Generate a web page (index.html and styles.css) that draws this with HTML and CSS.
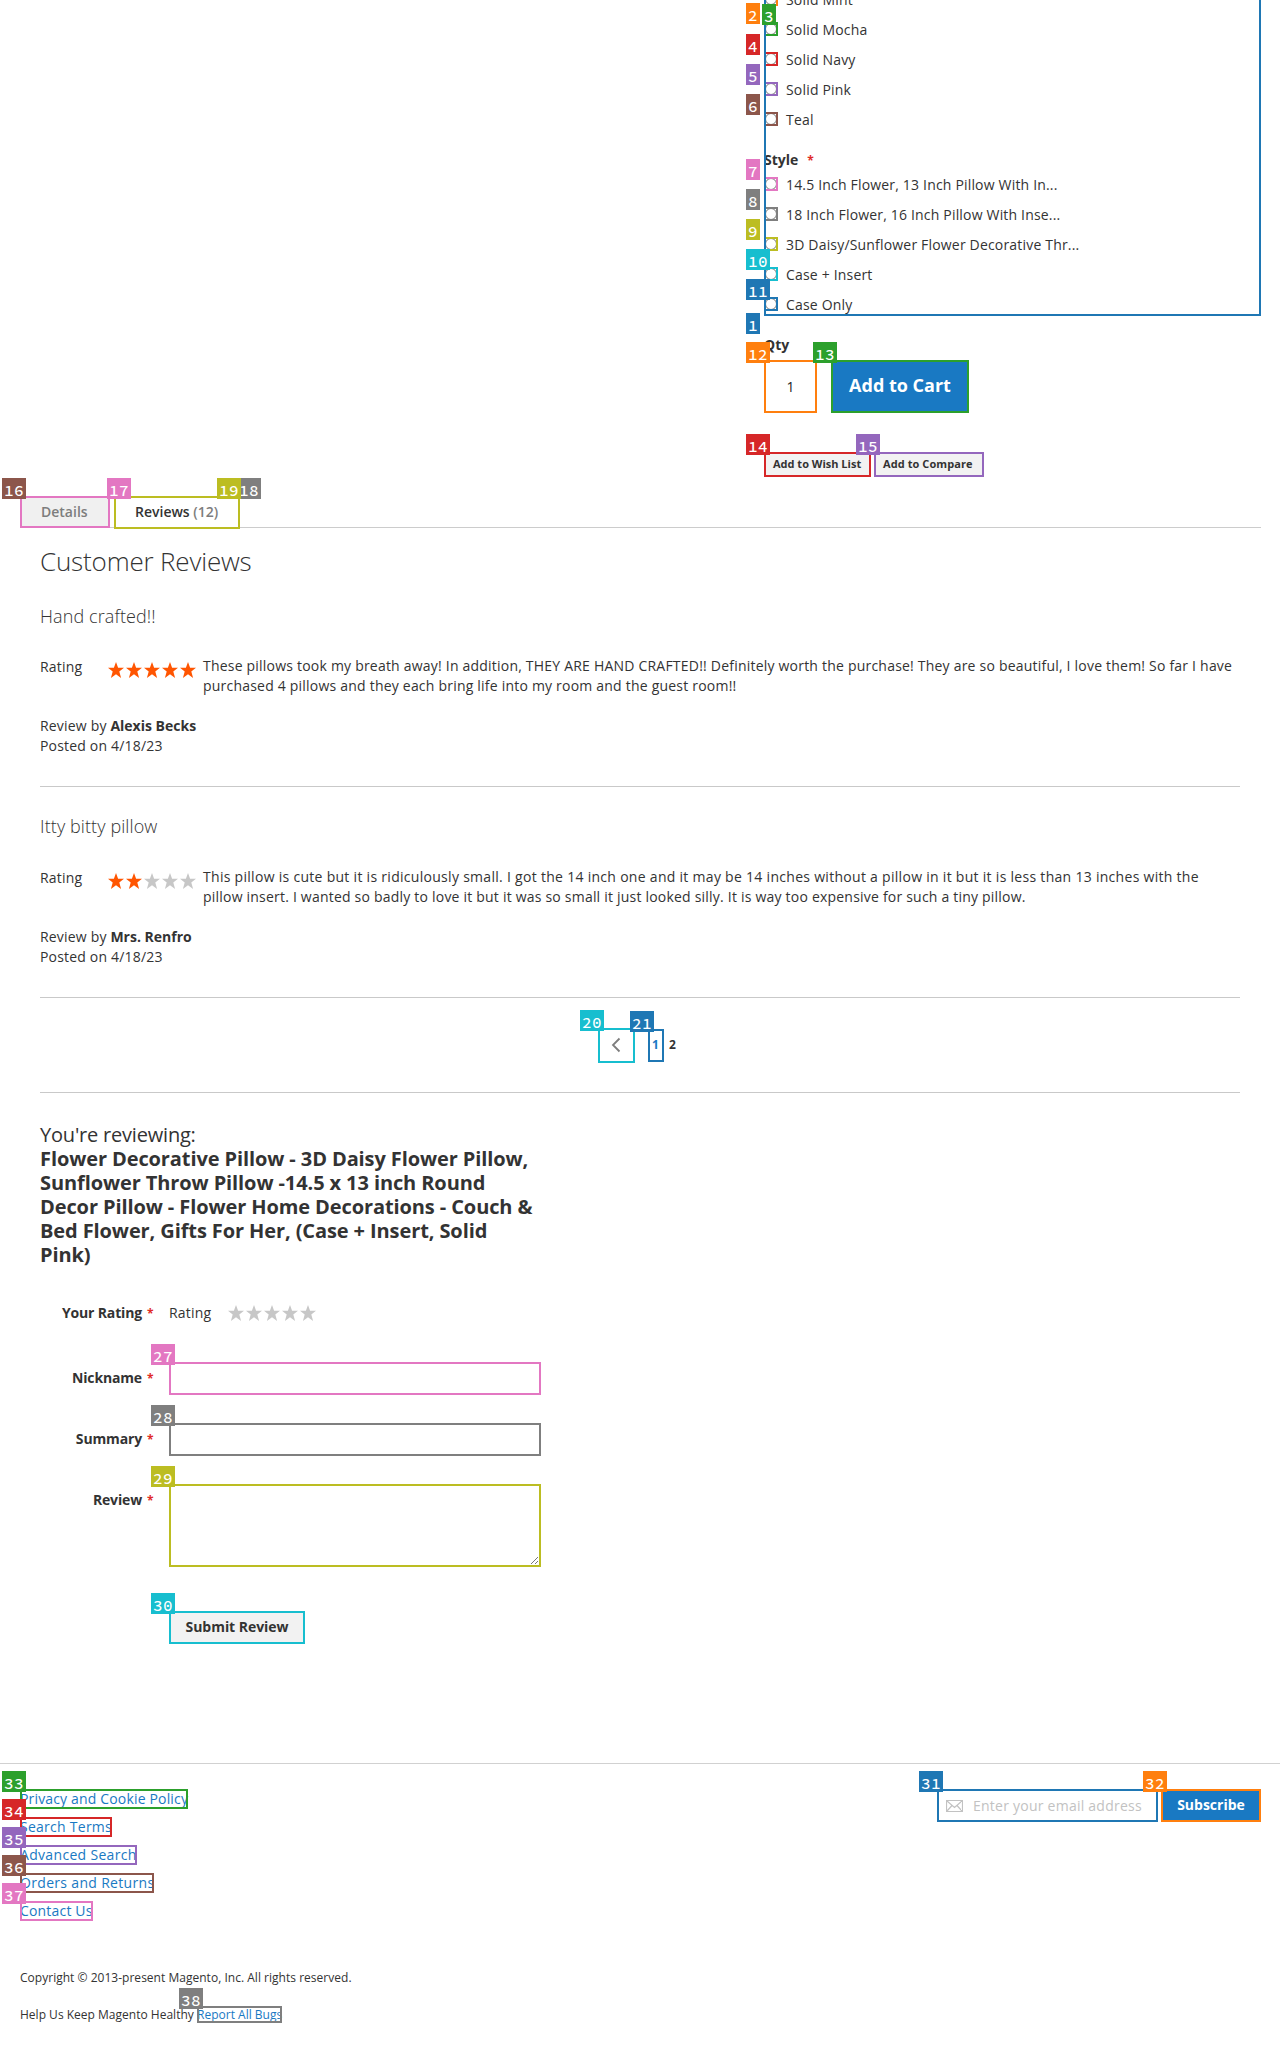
FILE: index.html
```html
<!DOCTYPE html>
<html lang="en">
<head>
<meta charset="utf-8">
<title>Customer Reviews</title>
<link rel="stylesheet" href="styles.css">
</head>
<body>
<svg class="defs" width="0" height="0" aria-hidden="true">
  <symbol id="star" viewBox="0 0 16 16"><path d="M8 0l2.1 5.7H16l-4.7 3.8L13.100 16 8 12.200 2.900 16l1.800-6.500L0 5.700h5.900z"/></symbol>
  <symbol id="stars" viewBox="0 0 88 16">
    <use href="#star" x="0" width="16" height="16"/><use href="#star" x="18" width="16" height="16"/><use href="#star" x="36" width="16" height="16"/><use href="#star" x="54" width="16" height="16"/><use href="#star" x="72" width="16" height="16"/>
  </symbol>
</svg>

<section class="product-info">
  <div class="options mark blue">
    <div class="option first"><span class="radio mark orange"><b class="tag low">2</b></span>Solid Mint</div>
    <div class="option"><span class="radio mark green"><b class="tag inset">3</b></span>Solid Mocha</div>
    <div class="option"><span class="radio mark red"><b class="tag">4</b></span>Solid Navy</div>
    <div class="option"><span class="radio mark purple"><b class="tag">5</b></span>Solid Pink</div>
    <div class="option"><span class="radio mark brown"><b class="tag">6</b></span>Teal</div>
    <div class="option-title">Style<span class="required">*</span></div>
    <div class="option"><span class="radio mark pink"><b class="tag">7</b></span>14.5 Inch Flower, 13 Inch Pillow With In...</div>
    <div class="option"><span class="radio mark gray"><b class="tag">8</b></span>18 Inch Flower, 16 Inch Pillow With Inse...</div>
    <div class="option"><span class="radio mark olive"><b class="tag">9</b></span>3D Daisy/Sunflower Flower Decorative Thr...</div>
    <div class="option"><span class="radio mark cyan"><b class="tag">10</b></span>Case + Insert</div>
    <div class="option last"><span class="radio mark blue"><b class="tag">11</b></span>Case Only</div>
    <b class="tag bottom">1</b>
  </div>
  <div class="qty-label">Qty</div>
  <div class="buy-row">
    <div class="qty mark orange">1<b class="tag">12</b></div>
    <div class="cart mark green">Add to Cart<b class="tag">13</b></div>
  </div>
  <div class="links-row">
    <div class="small-btn wish mark red">Add to Wish List<b class="tag">14</b></div>
    <div class="small-btn compare mark purple">Add to Compare<b class="tag">15</b></div>
  </div>
</section>

<nav class="tabs">
  <div class="tab details mark pink">Details<b class="tag brown">16</b><b class="tag second">17</b></div>
  <div class="tab reviews mark olive">Reviews&nbsp;<span class="count">(12)</span><b class="tag gray t18">18</b><b class="tag t19">19</b></div>
</nav>

<main>
  <h2>Customer Reviews</h2>
  <article class="review">
    <h3>Hand crafted!!</h3>
    <div class="review-body">
      <span class="rating-label">Rating</span>
      <svg class="stars" width="88" height="16"><use href="#stars" fill="#ff5501"/></svg>
      <p>These pillows took my breath away! In addition, THEY ARE HAND CRAFTED!! Definitely worth the purchase! They are so beautiful, I love them! So far I have purchased 4 pillows and they each bring life into my room and the guest room!!</p>
    </div>
    <div class="author">Review by <strong>Alexis Becks</strong><br>Posted on 4/18/23</div>
  </article>
  <article class="review">
    <h3>Itty bitty pillow</h3>
    <div class="review-body">
      <span class="rating-label">Rating</span>
      <svg class="stars" width="88" height="16"><g fill="#ff5501"><use href="#star" width="16" height="16"/><use href="#star" x="18" width="16" height="16"/></g><g fill="#c7c7c7"><use href="#star" x="36" width="16" height="16"/><use href="#star" x="54" width="16" height="16"/><use href="#star" x="72" width="16" height="16"/></g></svg>
      <p><span class="loose">This pillow is cute but it is ridiculously small. I got the 14 inch one and it may be 14 inches without a pillow in it but it is less than 13 inches with the</span> pillow insert. I wanted so badly to love it but it was so small it just looked silly. It is way too expensive for such a tiny pillow.</p>
    </div>
    <div class="author">Review by <strong>Mrs. Renfro</strong><br>Posted on 4/18/23</div>
  </article>

  <div class="pager">
    <div class="prev mark cyan"><svg width="10" height="16" viewBox="0 0 10 16"><path d="M8.500 1.500L2 8l6.500 6.500" fill="none" stroke="#7d7d7d" stroke-width="1.800"/></svg><b class="tag">20</b></div>
    <div class="page mark blue">1<b class="tag">21</b></div>
    <div class="current">2</div>
  </div>

  <form class="review-form">
    <div class="legend">You're reviewing:<strong>Flower Decorative Pillow - 3D Daisy Flower Pillow, Sunflower Throw Pillow -14.5 x 13 inch Round Decor Pillow - Flower Home Decorations - Couch &amp; Bed Flower, Gifts For Her, (Case + Insert, Solid Pink)</strong></div>
    <div class="field rating"><label>Your Rating<span>*</span></label><span class="rate-name">Rating</span><svg width="88" height="16"><use href="#stars" fill="#c7c7c7"/></svg></div>
    <div class="field"><label>Nickname<span>*</span></label><div class="control mark pink"><b class="tag">27</b></div></div>
    <div class="field"><label>Summary<span>*</span></label><div class="control mark gray"><b class="tag">28</b></div></div>
    <div class="field area"><label>Review<span>*</span></label><div class="control mark olive"><svg width="7" height="7" viewBox="0 0 7 7"><path d="M0 7L7 0M4 7l3-3" stroke="#555" stroke-width=".8"/></svg><b class="tag">29</b></div></div>
    <div class="submit mark cyan">Submit Review<b class="tag">30</b></div>
  </form>
</main>

<footer>
  <div class="footer-top">
    <ul>
      <li><a class="mark green">Privacy and Cookie Policy<b class="tag">33</b></a></li>
      <li><a class="mark red">Search Terms<b class="tag">34</b></a></li>
      <li><a class="mark purple">Advanced Search<b class="tag">35</b></a></li>
      <li><a class="mark brown">Orders and Returns<b class="tag">36</b></a></li>
      <li><a class="mark pink">Contact Us<b class="tag">37</b></a></li>
    </ul>
    <div class="newsletter">
      <div class="email mark blue"><svg width="17" height="12" viewBox="0 0 17 12"><path d="M.5.5h16v11H.5zM1 1l7.500 6.500L16 1M1 11l5-5.500M16 11l-5-5.500" fill="none" stroke="#c2c2c2" stroke-width="1.200"/></svg>Enter your email address<b class="tag">31</b></div>
      <div class="subscribe mark orange">Subscribe<b class="tag">32</b></div>
    </div>
  </div>
  <div class="copyright">Copyright © 2013-present Magento, Inc. All rights reserved.</div>
  <div class="bugs">Help Us Keep Magento Healthy <a class="mark gray">Report All Bugs<b class="tag">38</b></a></div>
</footer>
</body>
</html>
```
FILE: styles.css
```css
* { box-sizing: border-box; }
html { overflow: hidden; }
body {
  margin: 0;
  width: 1280px;
  height: 2048px;
  overflow: hidden;
  background: #fff;
  color: #333;
  font: 14px/20px "Open Sans", "Noto Sans", sans-serif;
  letter-spacing: .18px;
}
h2, h3, p, ul { margin: 0; padding: 0; font-weight: 300; }
p { font-weight: 400; letter-spacing: .21px; }
.loose { letter-spacing: .29px; }
strong { font-weight: 700; letter-spacing: 0; }
.defs { display: block; height: 0; }

/* numbered element markers */
.blue { --c: #1f77b4; }
.orange { --c: #ff7f0e; }
.green { --c: #2ca02c; }
.red { --c: #d62728; }
.purple { --c: #9467bd; }
.brown { --c: #8c564b; }
.pink { --c: #e377c2; }
.gray { --c: #7f7f7f; }
.olive { --c: #bcbd22; }
.cyan { --c: #17becf; }
.mark { position: relative; }
.mark::after {
  content: "";
  position: absolute;
  inset: 0;
  border: 2px solid var(--c);
  pointer-events: none;
}
.tag {
  position: absolute;
  z-index: 2;
  left: -18px;
  top: -18px;
  height: 21px;
  padding: 2px 2px 0;
  background: var(--c);
  color: #fff;
  font: 500 16px/21px "Source Code Pro", "Noto Sans Mono", "DejaVu Sans Mono", monospace;
  letter-spacing: .38px;
}
.tag.low { top: 11px; }
.tag.inset { left: -2px; }
.tag.bottom { top: auto; bottom: -18px; }

/* product options */
.product-info { padding-left: 764px; height: 496px; }
.options { width: 497px; height: 316px; }
.options::after { border-top: 0; }
.option { display: flex; height: 30px; padding-top: 5px; }
.option.first { height: 15px; padding: 0; }
.option.first { align-items: flex-end; line-height: 20px; padding-bottom: 5px; }
.option.first .radio { margin-bottom: 4px; flex: none; }
.option.last { height: 26px; }
.radio { flex: none; width: 14px; height: 14px; margin: 2px 8px 0 0; }
.radio::before {
  content: "";
  position: absolute;
  inset: 1px;
  border: 1px solid #767676;
  border-radius: 50%;
}
.option-title { height: 35px; padding-top: 15px; font-weight: 700; letter-spacing: 0; }
.required { margin-left: 9px; color: #e02b27; font-size: 12px; }
.qty-label { margin-top: 19px; height: 25px; font-weight: 700; letter-spacing: 0; }
.buy-row { display: flex; gap: 14px; letter-spacing: 0; }
.qty { width: 53px; height: 53px; line-height: 54px; text-align: center; color: #222; }
.cart { width: 138px; height: 53px; background: #1979c3; color: #fff; font-size: 18px; font-weight: 700; line-height: 50px; text-align: center; }
.links-row { display: flex; gap: 3px; margin-top: 39px; letter-spacing: 0; }
.small-btn { width: 107px; height: 25px; padding-left: 9px; background: #f2f2f2; font-size: 11px; font-weight: 700; line-height: 24px; white-space: nowrap; }
.compare { width: 110px; letter-spacing: .08px; }

/* tabs */
.tabs { display: flex; gap: 4px; height: 32px; margin: 0 19px 0 20px; border-bottom: 1px solid #ccc; font-weight: 600; line-height: 31px; letter-spacing: 0; }
.tab { height: 32px; padding-left: 21px; }
.details { width: 90px; background: #f0f0f0; color: #7d7d7d; }
.reviews { width: 126px; height: 33px; background: #fff; }
.count { color: #7d7d7d; }
.tag.second { left: 87px; }
.tag.t18 { left: 123px; }
.tag.t19 { left: 103px; }

/* reviews */
main { padding: 19px 40px 0; }
h2 { height: 29px; font-size: 26px; line-height: 29px; letter-spacing: -.18px; }
.review { height: 211px; padding-top: 30px; border-bottom: 1px solid #c9c9c9; }
.review + .review { padding-top: 29px; }
.review + .review .review-body { margin-top: 31px; }
h3 { font-size: 18px; line-height: 20px; letter-spacing: .1px; }
.review-body { display: flex; margin-top: 30px; height: 60px; }
.rating-label { width: 68px; margin-top: 1px; }
.stars { flex: none; margin: 6px 7px 0 0; }
.review-body p { flex: 1; }
.pager { display: flex; height: 95px; padding: 30px 0 0 558px; border-bottom: 1px solid #c9c9c9; font-size: 12px; font-weight: 700; line-height: 32px; letter-spacing: 0; }
.prev { display: flex; align-items: center; justify-content: center; width: 37px; height: 35px; padding: 0 2px 2px 0; }
.page { width: 16px; height: 33px; margin: 1px 0 0 13px; padding-left: 4px; color: #1979c3; }
.current { margin: 1px 0 0 5px; }

/* review form */
.review-form { width: 501px; padding-top: 30px; }
.legend { height: 180px; font-size: 20px; line-height: 24px; letter-spacing: -.2px; }
.legend strong { display: block; letter-spacing: -.1px; }
.field { display: flex; height: 61px; }
.field label { width: 129px; padding: 6px 16px 0 0; text-align: right; font-weight: 700; letter-spacing: -.15px; }
.field label span { display: inline-block; width: 6px; margin-left: 5px; color: #e02b27; font-size: 12px; }
.field.rating { height: 59px; }
.field.rating label { padding-top: 0; }
.rating svg { margin: 2px 0 0 17px; }
.rate-name { width: 42px; }
.control { width: 372px; height: 33px; }
.area { height: 127px; }
.area .control { height: 83px; }
.control svg { position: absolute; right: 3px; bottom: 3px; }
.submit { width: 136px; height: 33px; margin-left: 129px; background: #f2f2f2; font-weight: 700; line-height: 32px; text-align: center; letter-spacing: -.05px; }

/* footer */
footer { margin-top: 119px; border-top: 1px solid #d1d1d1; padding: 25px 19px 0 20px; }
.footer-top { display: flex; justify-content: space-between; height: 180px; }
ul { list-style: none; font-weight: 400; }
li { height: 28px; }
a { color: #1979c3; }
li a { display: inline-block; height: 20px; }
li a.green { letter-spacing: .16px; }
li a.red { letter-spacing: .26px; }
li a.purple, li a.brown { letter-spacing: .32px; }
.newsletter { display: flex; gap: 3px; }
.email { display: flex; align-items: center; gap: 10px; width: 221px; height: 33px; padding-left: 9px; color: #c2c2c2; white-space: nowrap; letter-spacing: .24px; }
.subscribe { width: 100px; height: 33px; background: #1979c3; color: #fff; font-weight: 700; line-height: 31px; text-align: center; letter-spacing: 0; }
.tag, li a .tag { letter-spacing: .38px; }
.copyright { font-size: 12px; line-height: 17px; letter-spacing: .02px; }
.bugs { margin-top: 20px; font-size: 12px; line-height: 17px; letter-spacing: .01px; }
.bugs a { display: inline-block; }
```
